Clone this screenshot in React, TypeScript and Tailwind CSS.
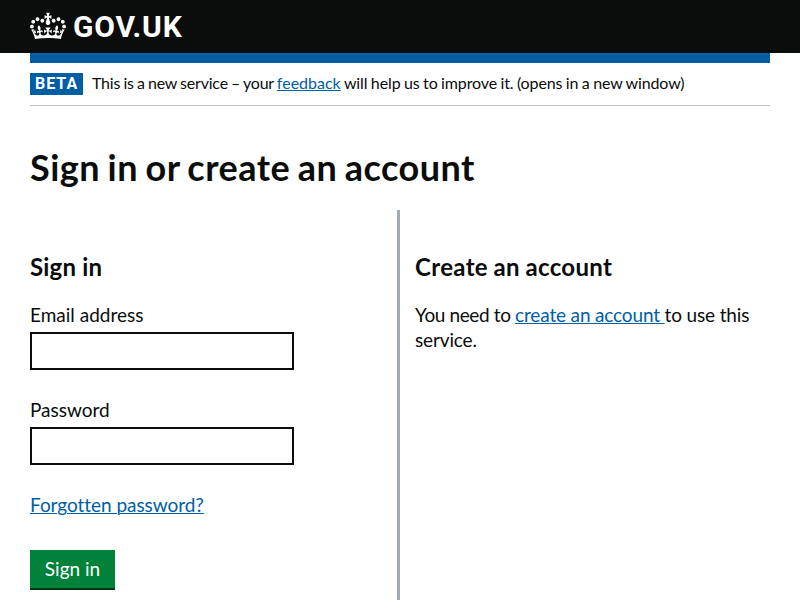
import type { ReactNode } from "react";

function Crown() {
  return (
    <svg className="block h-8 w-9" viewBox="0 0 132 97" fill="#fff" fillRule="evenodd" aria-hidden="true">
      <path d="M25 30.2c3.5 1.5 7.7-.2 9.1-3.7 1.5-3.6-.2-7.8-3.9-9.2-3.6-1.4-7.6.3-9.1 3.9-1.4 3.5.3 7.5 3.9 9zM9 39.5c3.6 1.5 7.8-.2 9.2-3.7 1.5-3.6-.2-7.8-3.9-9.1-3.6-1.5-7.6.2-9.1 3.8-1.4 3.5.3 7.5 3.8 9zM4.4 57.2c3.5 1.5 7.7-.2 9.1-3.8 1.5-3.6-.2-7.7-3.9-9.1-3.5-1.5-7.6.3-9.1 3.8-1.4 3.5.3 7.6 3.9 9.1zm38.3-21.4c3.5 1.5 7.7-.2 9.1-3.8 1.5-3.6-.2-7.7-3.9-9.1-3.6-1.5-7.6.3-9.1 3.8-1.3 3.6.4 7.7 3.9 9.1zm64.4-5.6c-3.6 1.5-7.8-.2-9.1-3.7-1.5-3.6.2-7.8 3.8-9.2 3.6-1.4 7.7.3 9.2 3.9 1.3 3.5-.4 7.5-3.9 9zm15.9 9.3c-3.6 1.5-7.7-.2-9.1-3.7-1.5-3.6.2-7.8 3.7-9.1 3.6-1.5 7.7.2 9.2 3.8 1.5 3.5-.3 7.5-3.8 9zm4.7 17.7c-3.6 1.5-7.8-.2-9.2-3.8-1.5-3.6.2-7.7 3.9-9.1 3.6-1.5 7.7.3 9.2 3.8 1.3 3.5-.4 7.6-3.9 9.1zM89.3 35.8c-3.6 1.5-7.8-.2-9.2-3.8-1.4-3.6.2-7.7 3.9-9.1 3.6-1.5 7.7.3 9.2 3.8 1.4 3.6-.3 7.7-3.9 9.1zM69.7 17.7l8.9 4.7V9.3l-8.9 2.8c-.2-.3-.5-.6-.9-.9L72.4 0H59.6l3.5 11.2c-.3.3-.6.5-.9.9l-8.8-2.8v13.1l8.8-4.7c.3.3.6.7.9.9l-5 15.4v.1c-.2.8-.4 1.6-.4 2.4 0 4.1 3.1 7.5 7 8.1h.2c.3 0 .7.1 1 .1.4 0 .7 0 1-.1h.2c4-.6 7.1-4.1 7.1-8.1 0-.8-.1-1.7-.4-2.4V34l-5.1-15.4c.4-.2.7-.6 1-.9zM66 92.8c16.9 0 32.8 1.1 47.1 3.2 4-16.9 8.9-26.7 14-33.5l-9.6-3.4c1 4.9 1.1 7.2 0 10.2-1.5-1.4-3-4.3-4.2-8.7L108.6 76c2.8-2 5-3.2 7.5-3.3-4.4 9.4-10 11.9-13.6 11.2-4.3-.8-6.3-4.6-5.6-7.9 1-4.7 5.7-5.9 8-.5 4.3-8.7-3-11.4-7.6-8.8 7.1-7.2 7.9-13.5 2.1-21.1-8 6.1-8.1 12.3-4.5 20.8-4.7-5.4-12.1-2.5-9.5 6.2 3.4-5.2 7.9-2 7.2 3.1-.6 4.3-6.4 7.8-13.5 7.2-10.3-.9-10.9-8-11.2-13.8 2.5-.5 7.1 1.8 11 7.3L80.2 60c-4.1 4.4-8 5.3-12.3 5.4 1.4-4.4 8-11.6 8-11.6H55.5s6.4 7.2 7.9 11.6c-4.2-.1-8-1-12.3-5.4l1.4 16.4c3.9-5.5 8.5-7.7 10.9-7.3-.3 5.8-.9 12.8-11.1 13.8-7.2.6-12.9-2.9-13.5-7.2-.7-5 3.8-8.3 7.1-3.1 2.7-8.7-4.6-11.6-9.4-6.2 3.7-8.5 3.6-14.7-4.6-20.8-5.8 7.6-5 13.9 2.2 21.1-4.7-2.6-11.9.1-7.7 8.8 2.3-5.5 7.1-4.2 8.1.5.7 3.3-1.3 7.1-5.7 7.9-3.5.7-9-1.8-13.5-11.2 2.5.1 4.7 1.3 7.5 3.3l-4.7-15.4c-1.2 4.4-2.7 7.2-4.3 8.7-1.1-3-.9-5.3 0-10.2l-9.5 3.4c5 6.9 9.9 16.7 14 33.5 14.8-2.1 30.8-3.2 47.7-3.2z" />
    </svg>
  );
}

function Link({ children }: { children: ReactNode }) {
  return (
    <a href="#" className="text-[#005ea5] underline decoration-1 underline-offset-1">
      {children}
    </a>
  );
}

function Field({ id, label, type }: { id: string; label: string; type: string }) {
  return (
    <div className="flex flex-col gap-[5px]">
      <label htmlFor={id}>{label}</label>
      <input id={id} type={type} className="h-[38px] w-[264px] border-2 border-[#0b0c0c] px-1 outline-none" />
    </div>
  );
}

export default function App() {
  return (
    <div className="h-[600px] overflow-hidden bg-white font-[Lato,sans-serif] text-[19px] leading-[25px] text-[#0b0c0c] [font-variant-ligatures:none]">
      <header className="flex h-[53px] items-center bg-[#0b0c0c] px-[30px] pb-px text-white">
        <Crown />
        <span className="ml-[7px] pt-[2px] font-[Roboto,sans-serif] text-[30px] leading-[30px] font-bold tracking-[0.8px]">GOV.UK</span>
      </header>
      <div className="mx-[30px]">
        <div className="h-[10px] bg-[#005ea5]" />
        <div className="flex h-[43px] items-start border-b border-[#bfc1c3] pt-[10px] text-[16px] leading-[20px]">
          <strong className="mr-[9px] h-[22px] w-[53px] bg-[#005ea5] pl-[5px] font-[Roboto,sans-serif] leading-[22px] font-bold tracking-[1px] text-white">
            BETA
          </strong>
          <span className="whitespace-nowrap">
            <span className="tracking-[-0.2px] [word-spacing:-0.7px]">This is a new service – your </span>
            <Link>feedback</Link>
            <span className="tracking-[-0.12px] [word-spacing:-0.5px]"> will help us to improve it. (opens in a new window)</span>
          </span>
        </div>
        <h1 className="mt-[41px] text-[36px] leading-[40px] font-bold tracking-[0.5px] [word-spacing:-1.8px]">
          Sign in or create an account
        </h1>
        <main className="mt-[23px] flex">
          <form className="flex w-[370px] flex-col items-start border-r-[3px] border-[#a1acb2] pt-[42px] pb-10">
            <h2 className="mb-5 text-[24px] leading-[30px] font-bold tracking-[0.2px]">Sign in</h2>
            <div className="flex flex-col gap-[27px]">
              <Field id="email" label="Email address" type="email" />
              <Field id="password" label="Password" type="password" />
              <p className="tracking-[-0.04px]">
                <Link>Forgotten password?</Link>
              </p>
            </div>
            <button type="button" className="mt-[33px] h-10 w-[85px] border-b-2 border-[#003618] bg-[#00823b] leading-[38px] text-white">
              Sign in
            </button>
          </form>
          <section className="w-[370px] pt-[42px] pl-[15px]">
            <h2 className="mb-5 text-[24px] leading-[30px] font-bold tracking-[0.35px] [word-spacing:-0.7px]">Create an account</h2>
            <p className="tracking-[-0.15px]">
              <span className="tracking-[-0.38px]">You need to </span>
              <Link>create an account </Link>to use this service.
            </p>
          </section>
        </main>
      </div>
    </div>
  );
}
